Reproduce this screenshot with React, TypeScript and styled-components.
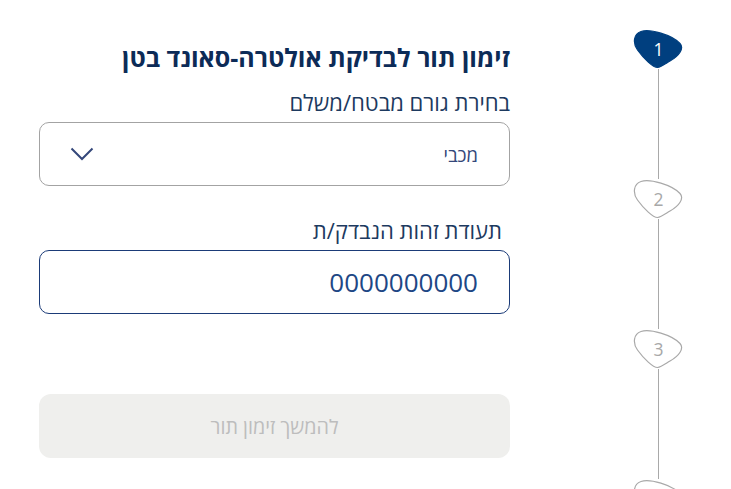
import React from "react";
import styled, { createGlobalStyle } from "styled-components";

const Global = createGlobalStyle`
  html, body { margin: 0; padding: 0; background: #ffffff; }
  body { font-family: "Open Sans", "Noto Sans", sans-serif; }
  * { box-sizing: border-box; }
`;

const Page = styled.div`
  display: flex;
  direction: ltr;
  width: 731px;
  height: 489px;
  overflow: hidden;
  padding-left: 39px;
`;

const Form = styled.div`
  direction: rtl;
  width: 471px;
  display: flex;
  flex-direction: column;
  padding-top: 40px;
`;

const Title = styled.h1`
  margin: 0;
  font-size: 25px;
  font-weight: 700;
  line-height: 34px;
  color: #0c2b57;
`;

const Label = styled.div<{ $indent?: number }>`
  font-size: 22px;
  font-weight: 400;
  line-height: 28px;
  color: #1d3a5f;
  padding-right: ${(p) => p.$indent ?? 0}px;
  margin-top: ${(p) => (p.$indent ? 30 : 14)}px;
`;

const Field = styled.div<{ $active?: boolean }>`
  height: 64px;
  margin-top: 6px;
  border: 1px solid ${(p) => (p.$active ? "#1b3b78" : "#a3a3a3")};
  border-radius: 10px;
  display: flex;
  align-items: center;
  justify-content: space-between;
  padding: 0 31px 0 30px;
`;

const SelectValue = styled.span`
  font-size: 18.5px;
  color: #34477a;
`;

const IdValue = styled.span`
  font-size: 26px;
  color: #1e4785;
`;

const Button = styled.button`
  margin-top: 80px;
  height: 64px;
  width: 100%;
  border: none;
  border-radius: 12px;
  background: #efefed;
  color: #bdbdbd;
  font-family: inherit;
  font-size: 19.8px;
  direction: rtl;
`;

const Steps = styled.div`
  margin-left: 122px;
  width: 52px;
  display: flex;
  flex-direction: column;
  align-items: center;
  padding-top: 29px;
`;

const Step = styled.div`
  position: relative;
  width: 52px;
  height: 40px;
  display: flex;
  align-items: center;
  justify-content: center;
  flex-shrink: 0;
`;

const StepNum = styled.span<{ $active?: boolean }>`
  position: relative;
  font-size: 17.5px;
  color: ${(p) => (p.$active ? "#ffffff" : "#a8a8a8")};
  margin-left: 1px;
`;

const BlobSvg = styled.svg`
  position: absolute;
  inset: 0;
`;

const Line = styled.div`
  width: 1px;
  height: 110px;
  background: #a9a9a9;
  flex-shrink: 0;
`;

const Blob = ({ active }: { active?: boolean }) => (
  <BlobSvg width="52" height="40" viewBox="0 0 52 40">
    <path
      d="M9 2.5 C 18 -0.5, 40 6, 48 14.5 C 52.5 19.5, 47 27, 38 32 C 33 35, 29 38, 25.5 38.5 C 21 38.5, 12 30, 5.5 21 C 0.5 14, 1.5 5, 9 2.5 Z"
      fill={active ? "#003f7f" : "#ffffff"}
      stroke={active ? "#003f7f" : "#a9a9a9"}
      strokeWidth="1.2"
    />
  </BlobSvg>
);

const StepItem = ({ n, active }: { n: number; active?: boolean }) => (
  <Step>
    <Blob active={active} />
    <StepNum $active={active}>{n}</StepNum>
  </Step>
);

const Chevron = () => (
  <svg width="24" height="14" viewBox="0 0 24 14">
    <path d="M1.5 1.5 L12 12 L22.5 1.5" fill="none" stroke="#34477a" strokeWidth="2" />
  </svg>
);

export default function App() {
  return (
    <>
      <Global />
      <Page>
        <Form>
          <Title>זימון תור לבדיקת אולטרה-סאונד בטן</Title>
          <Label>בחירת גורם מבטח/משלם</Label>
          <Field>
            <SelectValue>מכבי</SelectValue>
            <Chevron />
          </Field>
          <Label $indent={8}>תעודת זהות הנבדק/ת</Label>
          <Field $active>
            <IdValue>0000000000</IdValue>
          </Field>
          <Button>להמשך זימון תור</Button>
        </Form>
        <Steps>
          <StepItem n={1} active />
          <Line />
          <StepItem n={2} />
          <Line />
          <StepItem n={3} />
          <Line />
          <StepItem n={4} />
        </Steps>
      </Page>
    </>
  );
}
